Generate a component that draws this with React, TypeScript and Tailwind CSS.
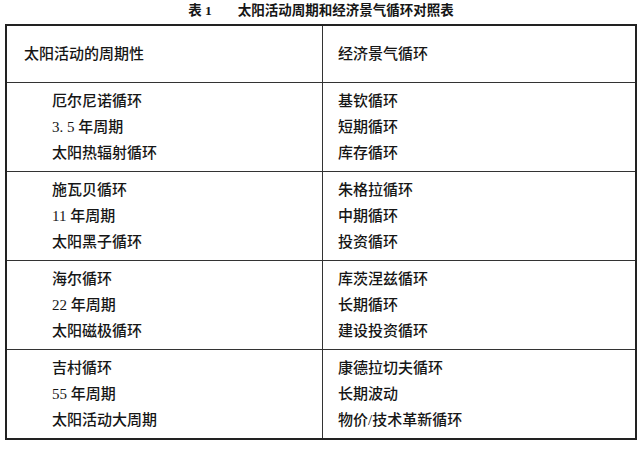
import React from 'react';

const groups = [
  {
    solar: ['厄尔尼诺循环', '3. 5 年周期', '太阳热辐射循环'],
    econ: ['基钦循环', '短期循环', '库存循环'],
  },
  {
    solar: ['施瓦贝循环', '11 年周期', '太阳黑子循环'],
    econ: ['朱格拉循环', '中期循环', '投资循环'],
  },
  {
    solar: ['海尔循环', '22 年周期', '太阳磁极循环'],
    econ: ['库茨涅兹循环', '长期循环', '建设投资循环'],
  },
  {
    solar: ['吉村循环', '55 年周期', '太阳活动大周期'],
    econ: ['康德拉切夫循环', '长期波动', '物价/技术革新循环'],
  },
];

const font = { fontFamily: '"Liberation Serif", "Noto Sans CJK SC", serif' };

const App: React.FC = () => {
  return (
    <div className="w-[642px] h-[449px] bg-white text-[#161616]" style={font}>
      <div className="h-[24px] flex justify-center pt-[1px]">
        <div className="text-[13.5px] leading-[20px] font-bold">
          <span>表 1</span>
          <span className="ml-[26px]">太阳活动周期和经济景气循环对照表</span>
        </div>
      </div>

      <div className="ml-[5px] w-[632px] border-2 border-[#222]">
        {/* header */}
        <div className="grid grid-cols-[315px_1fr] h-[57px] border-b border-[#333] text-[15px] font-medium">
          <div className="flex items-center pl-[17px]">太阳活动的周期性</div>
          <div className="flex items-center pl-[15px] border-l border-[#333]">经济景气循环</div>
        </div>

        {groups.map((g, i) => (
          <div
            key={i}
            className={`grid grid-cols-[315px_1fr] text-[15px] leading-[26px] font-medium ${
              i < groups.length - 1 ? 'h-[89px] border-b border-[#333]' : 'h-[88px]'
            }`}
          >
            <div className="pl-[45px] pt-[5px]">
              {g.solar.map((t) => (
                <div key={t}>{t}</div>
              ))}
            </div>
            <div className="pl-[15px] pt-[5px] border-l border-[#333]">
              {g.econ.map((t) => (
                <div key={t}>{t}</div>
              ))}
            </div>
          </div>
        ))}
      </div>
    </div>
  );
};

export default App;
